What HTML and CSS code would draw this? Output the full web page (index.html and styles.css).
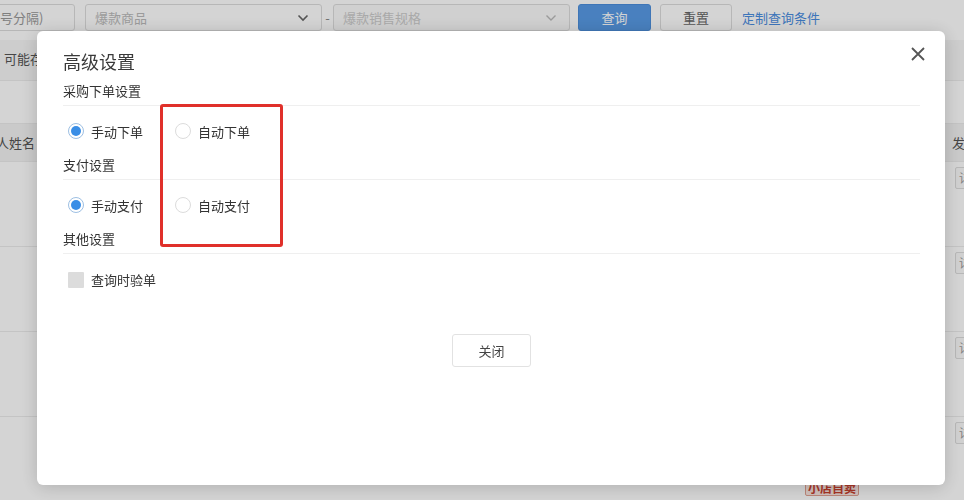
FILE: index.html
```html
<!DOCTYPE html>
<html lang="zh-CN">
<head>
<meta charset="utf-8">
<title>高级设置</title>
<link rel="stylesheet" href="styles.css">
</head>
<body>
<div class="page">
  <div class="toolbar">
    <div class="field first"><span>号分隔)</span></div>
    <div class="field select"><span class="val">爆款商品</span>
      <svg class="chev" width="12" height="8" viewBox="0 0 12 8"><path d="M1.5 1.5 L6 6 L10.5 1.5" fill="none" stroke="#666" stroke-width="1.6"/></svg>
    </div>
    <span class="dash">-</span>
    <div class="field select disabled"><span class="val">爆款销售规格</span>
      <svg class="chev" width="12" height="8" viewBox="0 0 12 8"><path d="M1.5 1.5 L6 6 L10.5 1.5" fill="none" stroke="#bbb" stroke-width="1.4"/></svg>
    </div>
    <button class="btn primary">查询</button>
    <button class="btn plain">重置</button>
    <a class="link">定制查询条件</a>
  </div>
  <div class="notice">可能存在</div>
  <div class="table">
    <div class="thead"><div class="c-left">人姓名</div><div class="c-mid"></div><div class="c-right">发</div></div>
    <div class="trow"><div class="c-left"></div><div class="c-mid"><span class="badge">小店自卖</span></div><div class="c-right"><span class="mini">详</span></div></div>
    <div class="trow"><div class="c-left"></div><div class="c-mid"><span class="badge">小店自卖</span></div><div class="c-right"><span class="mini">详</span></div></div>
    <div class="trow"><div class="c-left"></div><div class="c-mid"><span class="badge">小店自卖</span></div><div class="c-right"><span class="mini">详</span></div></div>
    <div class="trow"><div class="c-left"></div><div class="c-mid"><span class="badge">小店自卖</span></div><div class="c-right"><span class="mini">详</span></div></div>
  </div>
</div>
<div class="overlay"></div>
<div class="modal">
  <h2 class="title">高级设置</h2>
  <svg class="close" width="14" height="14" viewBox="0 0 14 14"><path d="M1 1 L13 13 M13 1 L1 13" stroke="#555" stroke-width="1.8" fill="none"/></svg>
  <div class="sec-head">采购下单设置</div>
  <div class="opt-row">
    <label class="opt"><span class="radio on"></span>手动下单</label>
    <label class="opt"><span class="radio"></span>自动下单</label>
  </div>
  <div class="sec-head">支付设置</div>
  <div class="opt-row">
    <label class="opt"><span class="radio on"></span>手动支付</label>
    <label class="opt"><span class="radio"></span>自动支付</label>
  </div>
  <div class="sec-head">其他设置</div>
  <div class="opt-row last">
    <label class="opt"><span class="check"></span>查询时验单</label>
  </div>
  <div class="foot"><button class="close-btn">关闭</button></div>
  <div class="mark"></div>
</div>
</body>
</html>
```
FILE: styles.css
```css
* { box-sizing: border-box; }
html, body { margin: 0; padding: 0; }
body {
  width: 964px;
  height: 500px;
  overflow: hidden;
  background: #fff;
  font-family: "Noto Sans CJK SC", "Noto Sans", sans-serif;
  font-size: 13px;
  color: #333;
}
.page { width: 964px; height: 500px; overflow: hidden; }

.toolbar {
  display: flex;
  align-items: center;
  padding-top: 4px;
  height: 31px;
}
.field {
  height: 27px;
  border: 1px solid #ddd;
  border-radius: 3px;
  background: #fff;
  display: flex;
  align-items: center;
  color: #999;
}
.field.first {
  width: 85px;
  margin-left: -10px;
  margin-right: 10px;
  padding-left: 9px;
}
.field.select {
  width: 237px;
  padding: 0 12px 0 9px;
  justify-content: space-between;
  color: #bbb;
}
.field.select.disabled { background: #fafafa; color: #ccc; }
.dash { width: 11px; text-align: center; color: #888; }
.btn {
  height: 27px;
  border-radius: 3px;
  font-family: inherit;
  font-size: 13px;
  padding: 0;
}
.btn.primary {
  width: 73px;
  margin-left: 8px;
  background: #589be6;
  border: 1px solid #4c8fdc;
  color: #fff;
}
.btn.plain {
  width: 72px;
  margin-left: 9px;
  background: #fff;
  border: 1px solid #ddd;
  color: #666;
}
.link { margin-left: 10px; color: #4a8de0; }

.notice {
  margin-top: 9px;
  height: 41px;
  line-height: 38px;
  padding-left: 4px;
  background: #f7f7f7;
  border-bottom: 1px solid #ececec;
  color: #555;
}
.table { margin-top: 42px; }
.thead, .trow {
  display: grid;
  grid-template-columns: 805px 145px 1fr;
}
.thead {
  height: 38px;
  background: #f3f3f3;
  align-items: center;
  color: #555;
  border-top: 1px solid #ececec;
}
.thead .c-left { margin-left: -4px; }
.thead .c-right { padding-left: 2px; }
.trow {
  height: 85px;
  border-top: 1px solid #ececec;
}
.trow .c-mid { padding-top: 61px; }
.trow .c-right { padding-top: 5px; padding-left: 5px; }
.badge {
  display: inline-block;
  font-size: 12px;
  font-weight: bold;
  line-height: 15px;
  padding: 0 2px;
  color: #c8402e;
  background: #fbe8e3;
  border: 1px solid #e0a090;
  border-radius: 2px;
}
.mini {
  display: inline-block;
  width: 24px;
  height: 22px;
  border: 1px solid #ddd;
  border-radius: 2px;
  background: #fafafa;
  color: #999;
  font-size: 12px;
  line-height: 20px;
  padding-left: 3px;
}

.overlay {
  position: fixed;
  inset: 0;
  background: rgba(0, 0, 0, 0.17);
}
.modal {
  position: fixed;
  left: 37px;
  top: 31px;
  width: 908px;
  height: 454px;
  background: #fff;
  border-radius: 6px;
  box-shadow: 0 2px 18px rgba(0, 0, 0, 0.18);
  padding: 18px 25px 0 26px;
}
.title {
  margin: 0 0 9px;
  font-size: 18px;
  font-weight: normal;
  line-height: 24px;
  color: #3a3a3a;
}
.close { position: absolute; left: 874px; top: 16px; }
.sec-head {
  line-height: 18px;
  padding-bottom: 5px;
  border-bottom: 1px solid #efefef;
  color: #333;
}
.opt-row {
  height: 50px;
  display: flex;
  align-items: center;
  padding-left: 5px;
}
.opt-row.last { height: 51px; }
.opt {
  display: flex;
  align-items: center;
  gap: 7px;
  margin-right: 32px;
  color: #333;
}
.radio {
  width: 16px;
  height: 16px;
  border-radius: 50%;
  border: 1px solid #dcdcdc;
  background: #fff;
  display: flex;
  align-items: center;
  justify-content: center;
}
.radio.on { border-color: #9dbfe3; }
.radio.on::after {
  content: "";
  width: 10px;
  height: 10px;
  border-radius: 50%;
  background: #3a8ee6;
}
.check {
  width: 16px;
  height: 16px;
  background: #dcdcdc;
  border-radius: 1px;
}
.foot {
  margin-top: 29px;
  display: flex;
  justify-content: center;
}
.close-btn {
  width: 79px;
  height: 33px;
  border: 1px solid #e2e2e2;
  border-radius: 3px;
  background: #fff;
  font-family: inherit;
  font-size: 13px;
  color: #444;
}
.mark {
  position: absolute;
  left: 123px;
  top: 73px;
  width: 123px;
  height: 143px;
  border: 3px solid #e0302a;
  border-radius: 3px;
}
```
